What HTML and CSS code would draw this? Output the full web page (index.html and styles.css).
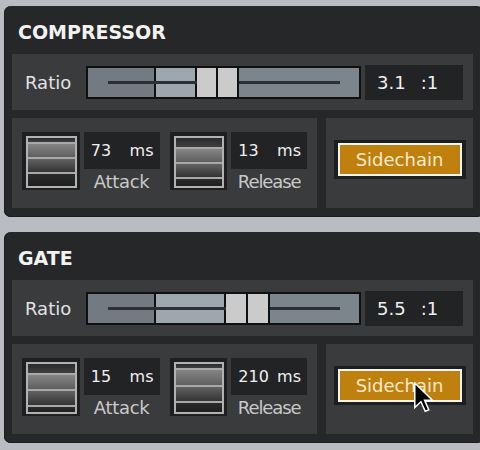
FILE: index.html
```html
<!DOCTYPE html>
<html>
<head>
<meta charset="utf-8">
<link rel="stylesheet" href="styles.css">
</head>
<body>
  <section class="panel">
    <h2 class="title">COMPRESSOR</h2>
    <div class="ratio-row">
      <span class="ratio-label">Ratio</span>
      <div class="slider">
        <div class="seg seg-a"></div>
        <div class="seg seg-b seg-b--comp"></div>
        <div class="seg thumb"></div>
        <div class="seg thumb"></div>
        <div class="seg seg-c"></div>
        <div class="track"></div>
      </div>
      <div class="ratio-value"><span>3.1</span><span class="ratio-unit">:1</span></div>
    </div>
    <div class="lower">
      <div class="box box-left">
        <div class="fader"><div class="fader-in pos-c1"><div class="band ba"></div><div class="band bb"></div><div class="band bc"></div><div class="band bd"></div></div></div>
        <div class="param">
          <div class="value"><span>73</span><span>ms</span></div>
          <div class="label">Attack</div>
        </div>
        <div class="fader"><div class="fader-in pos-c2"><div class="band ba"></div><div class="band bb"></div><div class="band bc"></div><div class="band bd"></div></div></div>
        <div class="param">
          <div class="value"><span>13</span><span>ms</span></div>
          <div class="label label--narrow">Release</div>
        </div>
      </div>
      <div class="box box-right">
        <div class="btn-frame"><div class="btn">Sidechain</div></div>
      </div>
    </div>
  </section>

  <section class="panel panel--second">
    <h2 class="title">GATE</h2>
    <div class="ratio-row">
      <span class="ratio-label">Ratio</span>
      <div class="slider">
        <div class="seg seg-a"></div>
        <div class="seg seg-b seg-b--gate"></div>
        <div class="seg thumb thumb--wide"></div>
        <div class="seg thumb thumb--wide"></div>
        <div class="seg seg-c"></div>
        <div class="track"></div>
      </div>
      <div class="ratio-value"><span>5.5</span><span class="ratio-unit">:1</span></div>
    </div>
    <div class="lower">
      <div class="box box-left">
        <div class="fader"><div class="fader-in pos-g1"><div class="band ba"></div><div class="band bb"></div><div class="band bc"></div><div class="band bd"></div></div></div>
        <div class="param">
          <div class="value"><span>15</span><span>ms</span></div>
          <div class="label">Attack</div>
        </div>
        <div class="fader"><div class="fader-in pos-g2"><div class="band ba"></div><div class="band bb"></div><div class="band bc"></div><div class="band bd"></div></div></div>
        <div class="param">
          <div class="value"><span>210</span><span>ms</span></div>
          <div class="label label--narrow">Release</div>
        </div>
      </div>
      <div class="box box-right">
        <div class="btn-frame"><div class="btn">Sidechain</div></div>
        <svg class="cursor" width="20" height="31" viewBox="0 0 13 20">
          <path d="M0.5 0.5 L0.5 16.5 L4.5 12.8 L7.3 19 L9.6 18 L6.9 11.8 L12 11.8 Z" fill="#000" stroke="#fff" stroke-width="1" stroke-linejoin="miter"/>
        </svg>
      </div>
    </div>
  </section>
</body>
</html>
```

FILE: styles.css
```css
html, body {
  margin: 0;
  padding: 0;
}
body {
  width: 480px;
  height: 450px;
  overflow: hidden;
  background: #b9bdc1;
  padding-top: 6px;
  box-sizing: border-box;
  font-family: "DejaVu Sans", Verdana, sans-serif;
}
.panel {
  margin-left: 4px;
  width: 480px;
  box-sizing: border-box;
  background: #262729;
  border-radius: 7px;
  padding: 15px 11px 9px 8px;
  box-shadow: inset 1px 0 0 #1c1d1f, inset 0 -1px 0 #1c1d1f;
}
.panel--second {
  margin-top: 15px;
}
.title {
  margin: 0 0 11px 6px;
  font-size: 19px;
  line-height: 22px;
  font-weight: bold;
  color: #f2f2f2;
  letter-spacing: 0;
}
.ratio-row {
  display: flex;
  align-items: center;
  height: 56px;
  background: #3a3b3d;
  padding-left: 13px;
}
.ratio-label {
  width: 61px;
  font-size: 18px;
  color: #e2e2e2;
}
.slider {
  position: relative;
  display: flex;
  width: 275px;
  height: 33px;
  box-sizing: border-box;
  border: 2px solid #0f1011;
  background: #7d858c;
}
.seg {
  box-sizing: border-box;
  height: 100%;
  border-right: 2px solid #0f1011;
}
.seg-a {
  width: 68px;
  background: #737a82;
}
.seg-b {
  background: #9ea6ae;
}
.seg-b--comp { width: 41px; }
.seg-b--gate { width: 70px; }
.thumb {
  position: relative;
  z-index: 2;
  width: 21px;
  background: #cbcbcb;
}
.thumb--wide { width: 22px; }
.seg-c {
  flex: 1;
  border-right: 0;
  background: #7d858c;
}
.track {
  position: absolute;
  z-index: 1;
  left: 20px;
  right: 19px;
  top: 13px;
  height: 3px;
  background: #2b3036;
}
.ratio-value {
  margin-left: 4px;
  width: 98px;
  height: 35px;
  box-sizing: border-box;
  background: #222325;
  padding-left: 12px;
  display: flex;
  align-items: center;
  font-size: 18px;
  color: #f0f0f0;
}
.ratio-unit {
  margin-left: 15px;
}
.lower {
  display: flex;
  gap: 9px;
  margin-top: 8px;
}
.box {
  height: 90px;
  background: #3a3b3d;
  box-sizing: border-box;
}
.box-left {
  width: 305px;
  display: flex;
  align-items: flex-start;
  padding: 14px 0 0 10px;
}
.box-right {
  position: relative;
  flex: 1;
  display: flex;
  justify-content: center;
  align-items: flex-start;
  padding-top: 22px;
}
.fader {
  width: 58px;
  height: 58px;
  box-sizing: border-box;
  background: #1e1f21;
  padding: 4px 3px 0 4px;
  margin-right: 4px;
}
.fader-in {
  height: 52px;
  box-sizing: border-box;
  border: 2px solid #b2b2b2;
  display: grid;
}
.pos-c1 { grid-template-rows: 4px 15px 15px 14px; }
.pos-c2 { grid-template-rows: 9px 15px 15px 9px; }
.pos-g1 { grid-template-rows: 9px 16px 16px 7px; }
.pos-g2 { grid-template-rows: 4px 17px 16px 11px; }
.band { box-sizing: border-box; }
.bb, .bc, .bd { border-top: 2px solid #a9a9a9; }
.ba { background: linear-gradient(#2a2a2a, #404040); }
.bb { background: linear-gradient(#858585, #5f5f5f); }
.bc { background: linear-gradient(#626262, #343434); }
.bd { background: linear-gradient(#2b2b2b, #1f1f1f); }
.param {
  width: 76px;
  margin-right: 10px;
  display: flex;
  flex-direction: column;
  align-items: center;
}
.value {
  width: 100%;
  height: 37px;
  box-sizing: border-box;
  background: #222325;
  display: flex;
  align-items: center;
  justify-content: space-between;
  padding: 0 6px 0 7px;
  font-size: 16px;
  color: #f0f0f0;
}
.label {
  margin-top: 3px;
  font-size: 18px;
  line-height: 20px;
  color: #c9c9c9;
  letter-spacing: -0.3px;
}
.label--narrow {
  letter-spacing: -1.1px;
}
.btn-frame {
  background: #1d1e20;
  padding: 3px 4px;
}
.btn {
  width: 124px;
  height: 33px;
  box-sizing: border-box;
  border: 2px solid #f4f4f4;
  background: #c0800e;
  color: #fbeacb;
  font-size: 18px;
  line-height: 29px;
  text-align: center;
}
.cursor {
  position: absolute;
  left: 88px;
  top: 38px;
}
```
